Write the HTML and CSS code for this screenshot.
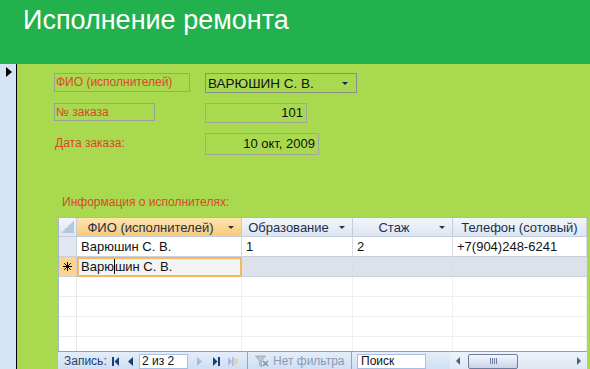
FILE: index.html
```html
<!DOCTYPE html>
<html lang="ru">
<head>
  <meta charset="UTF-8">
  <title>Исполнение ремонта</title>
  <link rel="stylesheet" href="styles.css">
</head>
<body>
  <div class="screen">
    <header class="title-bar">
      <h1>Исполнение ремонта</h1>
    </header>

    <div class="form-area">
      <div class="record-strip"><span class="record-arrow"></span></div>

      <main class="form-body">
        <div class="field-row row-fio">
          <span class="label boxed">ФИО (исполнителей)</span>
          <div class="field combo">ВАРЮШИН С. В.<span class="combo-arrow"></span></div>
        </div>

        <div class="field-row row-order">
          <span class="label boxed">№ заказа</span>
          <div class="field order-field">101</div>
        </div>

        <div class="field-row row-date">
          <span class="label">Дата заказа:</span>
          <div class="field date-field">10 окт, 2009</div>
        </div>

        <p class="section-label">Информация о исполнителях:</p>

        <div class="datasheet">
          <div class="grid-wrap">
            <div class="grid">
              <!-- заголовок -->
              <div class="hcell corner"><span class="corner-mark"></span></div>
              <div class="hcell active"><span class="htext">ФИО (исполнителей)</span><span class="sort-arrow"></span></div>
              <div class="hcell"><span class="htext">Образование</span><span class="sort-arrow"></span></div>
              <div class="hcell"><span class="htext">Стаж</span><span class="sort-arrow"></span></div>
              <div class="hcell"><span class="htext">Телефон (сотовый)</span></div>

              <!-- запись 1 -->
              <div class="sel sel-data"></div>
              <div class="cell">Варюшин С. В.</div>
              <div class="cell">1</div>
              <div class="cell">2</div>
              <div class="cell">+7(904)248-6241</div>

              <!-- новая запись -->
              <div class="sel sel-new">
                <svg width="9" height="9" viewBox="0 0 9 9"><path d="M4.5 0 V9 M0 4.5 H9 M1.2 1.2 L7.8 7.8 M7.8 1.2 L1.2 7.8" stroke="#000" stroke-width="1"/></svg>
              </div>
              <div class="cell cell-edit">Варю<span class="caret"></span>шин С. В.</div>
              <div class="cell cell-new"></div>
              <div class="cell cell-new"></div>
              <div class="cell cell-new"></div>

              <div class="sel"></div><div class="cell empty"></div><div class="cell empty"></div><div class="cell empty"></div><div class="cell empty"></div>
              <div class="sel"></div><div class="cell empty"></div><div class="cell empty"></div><div class="cell empty"></div><div class="cell empty"></div>
              <div class="sel"></div><div class="cell empty"></div><div class="cell empty"></div><div class="cell empty"></div><div class="cell empty"></div>
              <div class="sel"></div><div class="cell empty"></div><div class="cell empty"></div><div class="cell empty"></div><div class="cell empty"></div>
            </div>
          </div>

          <div class="nav-bar">
            <div class="nav-seg nav-record">
              <span class="nav-caption">Запись:</span>
              <svg class="nav-icon" width="7" height="9" viewBox="0 0 7 9"><rect x="0" y="0" width="2" height="9" fill="#1c3f78"/><path d="M7 0 L2.5 4.5 L7 9 Z" fill="#1c3f78"/></svg>
              <svg class="nav-icon prev" width="5" height="9" viewBox="0 0 5 9"><path d="M5 0 L0 4.5 L5 9 Z" fill="#1c3f78"/></svg>
              <span class="nav-box">2 из 2</span>
              <svg class="nav-icon next" width="5" height="9" viewBox="0 0 5 9"><path d="M0 0 L5 4.5 L0 9 Z" fill="#a9bcd8"/></svg>
              <svg class="nav-icon last" width="7" height="9" viewBox="0 0 7 9"><path d="M0 0 L4.5 4.5 L0 9 Z" fill="#1c3f78"/><rect x="5" y="0" width="2" height="9" fill="#1c3f78"/></svg>
              <svg class="nav-icon new" width="10" height="9" viewBox="0 0 10 9"><path d="M0 0 L4 4.5 L0 9 Z" fill="#a9bcd8"/><rect x="4" y="0" width="1.5" height="9" fill="#a9bcd8"/><path d="M8 1.5 V7.5 M5.5 4.5 H10.5 M6.2 2.2 L9.8 6.8 M9.8 2.2 L6.2 6.8" stroke="#e6d39a" stroke-width="1.2"/></svg>
            </div>
            <div class="nav-seg nav-filter">
              <svg class="filter-icon" width="14" height="13" viewBox="0 0 14 13"><path d="M0.5 1 H10.5 L6.5 6 V12 L4.5 10.5 V6 Z" fill="#b9c4d4" stroke="#9aa7ba" stroke-width="0.8"/><path d="M8 6 L13 11 M13 6 L8 11" stroke="#8593a8" stroke-width="1.5"/></svg>
              <span class="filter-text">Нет фильтра</span>
            </div>
            <div class="nav-seg nav-search">
              <span class="search-box">Поиск</span>
            </div>
            <div class="nav-seg nav-scroll">
              <svg width="4" height="8" viewBox="0 0 4 8"><path d="M4 0 L0 4 L4 8 Z" fill="#4a5f86"/></svg>
              <span class="thumb"><span class="grip"></span></span>
              <svg class="scroll-right" width="4" height="8" viewBox="0 0 4 8"><path d="M0 0 L4 4 L0 8 Z" fill="#4a5f86"/></svg>
            </div>
          </div>
        </div>
      </main>
    </div>
  </div>
</body>
</html>
```

FILE: styles.css
```css
body {
  margin: 0;
  font-family: "Liberation Sans", Arial, sans-serif;
}

.screen {
  width: 590px;
  height: 369px;
  overflow: hidden;
  display: flex;
  flex-direction: column;
  background: #a9d94f;
}

.title-bar {
  height: 64px;
  flex-shrink: 0;
  background: #22b14c;
}
.title-bar h1 {
  margin: 0;
  padding: 7px 0 0 23px;
  font-size: 27px;
  line-height: 27px;
  font-weight: normal;
  color: #fff;
}

.form-area {
  flex: 1;
  display: flex;
}

.record-strip {
  width: 16px;
  flex-shrink: 0;
  background: #d5e4f4;
  border-right: 1px solid #000;
}
.record-arrow {
  display: block;
  width: 0;
  height: 0;
  margin: 3px 0 0 6px;
  border-left: 6px solid #000;
  border-top: 5px solid transparent;
  border-bottom: 5px solid transparent;
}

.form-body {
  flex: 1;
  padding: 9px 0 0 37px;
}

/* поля формы */
.field-row {
  display: grid;
  grid-template-columns: 151px auto;
  align-items: start;
}
.row-order,
.row-date {
  margin-top: 10px;
}

.label {
  font-size: 12px;
  color: #d9482b;
}
.label.boxed {
  box-sizing: border-box;
  border: 1px solid #9aa096;
  padding-left: 1px;
}
.row-fio .label {
  width: 136px;
  height: 19px;
  line-height: 17px;
}
.row-order .label {
  width: 101px;
  height: 18px;
  line-height: 16px;
}
.row-date .label {
  padding: 3px 0 0 1px;
}

.field {
  box-sizing: border-box;
  border: 1px solid #a2a69c;
  font-size: 13px;
  color: #111;
  text-align: right;
  padding-right: 3px;
}
.combo {
  width: 152px;
  height: 20px;
  display: flex;
  align-items: center;
  justify-content: space-between;
  padding: 0 8px 0 2px;
  border-color: #8a8f86;
  font-size: 13.5px;
}
.combo-arrow {
  width: 0;
  height: 0;
  border-left: 3px solid transparent;
  border-right: 3px solid transparent;
  border-top: 3px solid #1a1a5e;
}
.order-field {
  width: 102px;
  height: 20px;
  line-height: 18px;
}
.date-field {
  width: 114px;
  height: 22px;
  line-height: 20px;
}

.section-label {
  margin: 40px 0 8px;
  padding-left: 8px;
  font-size: 12px;
  line-height: 14px;
  color: #d9482b;
}

/* таблица */
.datasheet {
  margin-left: 4px;
  width: 529px;
  display: flex;
  flex-direction: column;
}
.grid-wrap {
  height: 133px;
  overflow: hidden;
  background: #fff;
  border-left: 1px solid #a9b7cc;
  border-top: 1px solid #a9b7cc;
}
.grid {
  display: grid;
  grid-template-columns: 18px 165px 111px 100px 134px;
  grid-template-rows: 19px;
  grid-auto-rows: 20px;
}

.hcell {
  box-sizing: border-box;
  display: flex;
  align-items: center;
  background: linear-gradient(#f3f6fb, #dde5f1);
  border-right: 1px solid #c3cfe1;
  border-bottom: 1px solid #c3cfe1;
  font-size: 13px;
  color: #1d2f4d;
  white-space: nowrap;
  overflow: hidden;
}
.hcell.active {
  background: linear-gradient(#fce5ad, #f8ca7a);
}
.htext {
  flex: 1;
  text-align: center;
}
.sort-arrow {
  width: 0;
  height: 0;
  margin: 0 7px 0 4px;
  border-left: 3px solid transparent;
  border-right: 3px solid transparent;
  border-top: 3px solid #333;
}
.corner {
  align-items: flex-end;
  justify-content: flex-end;
  padding: 0 2px 3px 0;
}
.corner-mark {
  width: 13px;
  height: 13px;
  background: linear-gradient(135deg, transparent 50%, #b8c6db 50%);
}

.sel {
  box-sizing: border-box;
  border-right: 1px solid #e3e7ee;
  border-bottom: 1px solid #e8ebf0;
  background: #fff;
}
.sel-data {
  background: #e1e8f3;
  border-color: #c8d0dd;
}
.sel-new {
  display: flex;
  align-items: center;
  justify-content: center;
  background: #fcd490;
  border-color: #c8d0dd;
}

.cell {
  box-sizing: border-box;
  padding-left: 4px;
  border-right: 1px solid #d9dee6;
  border-bottom: 1px solid #c8d0dd;
  font-size: 13px;
  line-height: 19px;
  color: #111;
  white-space: nowrap;
  overflow: hidden;
}
.cell-new {
  background: #dde1ea;
}
.cell-edit {
  background: #f4f4f4;
  border: 2px solid #f7b661;
  padding-left: 2px;
  line-height: 16px;
}
.caret {
  display: inline-block;
  width: 1px;
  height: 15px;
  background: #000;
  vertical-align: -3px;
}
.cell.empty {
  border-color: #eceff3;
}

/* навигация */
.nav-bar {
  box-sizing: border-box;
  height: 19px;
  display: flex;
  border-top: 1px solid #7fa2d6;
  background: linear-gradient(#e4edf9, #cfdef3);
  font-size: 12px;
}
.nav-seg {
  display: flex;
  align-items: center;
  box-sizing: border-box;
  border-right: 1px solid #86a6d6;
}
.nav-record {
  width: 190px;
  padding-left: 6px;
}
.nav-caption {
  width: 48px;
  color: #1f3f73;
}
.nav-icon.prev { margin-left: 9px; }
.nav-box {
  box-sizing: border-box;
  width: 49px;
  height: 15px;
  margin-left: 6px;
  padding-left: 2px;
  line-height: 13px;
  background: #fff;
  border: 1px solid #a6c0e3;
  color: #111;
}
.nav-icon.next { margin-left: 9px; }
.nav-icon.last { margin-left: 11px; }
.nav-icon.new { margin-left: 8px; }

.nav-filter {
  width: 104px;
  padding-left: 7px;
}
.filter-text {
  margin-left: 4px;
  color: #8c9ab0;
}

.nav-search {
  width: 98px;
  padding-left: 5px;
  border-right: none;
}
.search-box {
  box-sizing: border-box;
  width: 69px;
  height: 15px;
  padding-left: 3px;
  line-height: 13px;
  background: #fff;
  border: 1px solid #a6c0e3;
  color: #111;
}

.nav-scroll {
  flex: 1;
  padding: 0 6px 0 6px;
  border-right: none;
  background: linear-gradient(#eef3fa, #dde6f3);
}
.thumb {
  box-sizing: border-box;
  width: 50px;
  height: 15px;
  margin-left: 8px;
  display: flex;
  align-items: center;
  justify-content: center;
  border: 1px solid #6b7ea2;
  border-radius: 2px;
  background: linear-gradient(#f4f7fc, #c9d5e8);
}
.grip {
  width: 7px;
  height: 6px;
  background: repeating-linear-gradient(90deg, #6b7ea2 0 1px, transparent 1px 2px);
}
.scroll-right {
  margin-left: auto;
}
```
